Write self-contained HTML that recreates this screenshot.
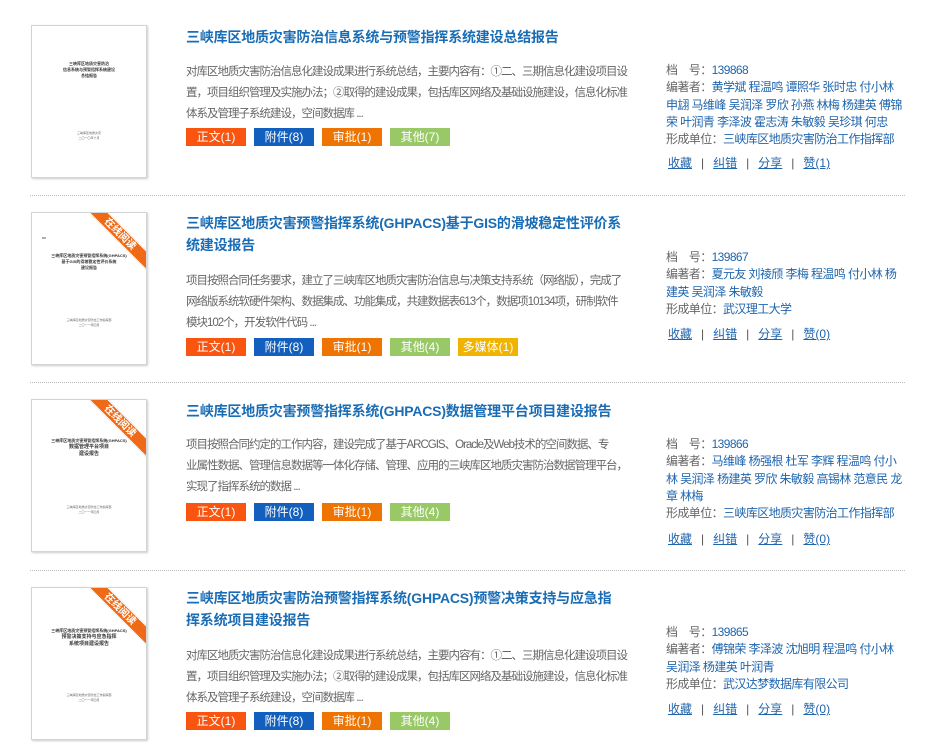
<!DOCTYPE html>
<html><head><meta charset="utf-8"><style>
*{margin:0;padding:0;box-sizing:border-box}
body{width:941px;height:754px;background:#fff;font-family:"Liberation Sans","Noto Sans CJK SC",sans-serif;position:relative;overflow:hidden}
.thumb{position:absolute;left:31px;width:116px;height:153px;border:1px solid #d4d4d4;box-shadow:1px 1px 2px #ccc;background:#fff;overflow:hidden}
.thumb .t{position:absolute;left:10px;right:10px;text-align:center;font-size:4px;line-height:6px;color:#333;font-weight:bold}
.thumb .b{position:absolute;left:10px;right:10px;top:105px;text-align:center;font-size:3px;line-height:5px;color:#666}
.rib{position:absolute;right:-24px;top:14px;width:100px;height:14px;background:#ee6a16;color:#fff;font-size:10px;line-height:14px;text-align:center;transform:rotate(45deg);font-weight:bold;border-top:1px solid #fff;border-bottom:1px solid #fff}
.title{position:absolute;left:186px;font-size:14px;font-weight:bold;color:#1a6db5;line-height:22px;white-space:nowrap;letter-spacing:-0.2px}
.desc{position:absolute;left:186px;font-size:11.5px;color:#666;line-height:21px;white-space:nowrap;letter-spacing:-1px}
.btns{position:absolute;left:186px;height:18px}
.btn{position:absolute;top:0;width:60px;height:18px;color:#fff;font-size:12px;line-height:18px;text-align:center}
.c1{background:#fa5510}.c2{background:#135fbd}.c3{background:#ee7300}.c4{background:#99c966}.c5{background:#f0b300}
.meta{position:absolute;left:666px;font-size:12px;line-height:17.3px;color:#666;white-space:nowrap;letter-spacing:-0.6px}
.meta a{color:#1f65ad;text-decoration:none}
.links{position:absolute;left:668px;font-size:12px;color:#555;white-space:nowrap}
.links a{color:#1f65ad;text-decoration:underline}
.links span{margin:0 9px}
.sep{position:absolute;left:30px;width:875px;border-top:1px dotted #bbb}
</style></head><body>

 <div class="thumb" style="top:25px"><div class="t" style="top:35px">三峡库区地质灾害防治<br>信息系统与预警指挥系统建设<br>总结报告</div><div class="b">三峡库区地质灾害<br>二〇一〇年十月</div></div>
 <div class="title" style="top:26px">三峡库区地质灾害防治信息系统与预警指挥系统建设总结报告</div>
 <div class="desc" style="top:62px">对库区地质灾害防治信息化建设成果进行系统总结，主要内容有：①二、三期信息化建设项目设<br>置，项目组织管理及实施办法；②取得的建设成果，包括库区网络及基础设施建设，信息化标准<br>体系及管理子系统建设，空间数据库 ...</div>
 <div class="btns" style="top:128px"><div class="btn c1" style="left:0">正文(1)</div><div class="btn c2" style="left:68px">附件(8)</div><div class="btn c3" style="left:136px">审批(1)</div><div class="btn c4" style="left:204px">其他(7)</div></div>
 <div class="meta" style="top:62px">档　号：<a>139868</a><br>编著者：<a>黄学斌 程温鸣 谭照华 张时忠 付小林<br>申翃 马维峰 吴润泽 罗欣 孙燕 林梅 杨建英 傅锦<br>荣 叶润青 李泽波 霍志涛 朱敏毅 吴珍琪 何忠</a><br>形成单位：<a>三峡库区地质灾害防治工作指挥部</a></div>
 <div class="links" style="top:154px"><a>收藏</a><span>|</span><a>纠错</a><span>|</span><a>分享</a><span>|</span><a>赞(1)</a></div>
<div class="sep" style="top:195px"></div>

 <div class="thumb" style="top:212px"><div class="t" style="top:22px;text-align:left">▭</div><div class="t" style="top:40px">三峡库区地质灾害预警指挥系统(GHPACS)<br>基于GIS的滑坡稳定性评价系统<br>建设报告</div><div class="b">三峡库区地质灾害防治工作指挥部<br>二〇一一年四月</div><div class="rib">在线阅读</div></div>
 <div class="title" style="top:212px">三峡库区地质灾害预警指挥系统(GHPACS)基于GIS的滑坡稳定性评价系<br>统建设报告</div>
 <div class="desc" style="top:271px">项目按照合同任务要求，建立了三峡库区地质灾害防治信息与决策支持系统（网络版），完成了<br>网络版系统软硬件架构、数据集成、功能集成，共建数据表613个，数据项10134项，研制软件<br>模块102个，开发软件代码 ...</div>
 <div class="btns" style="top:338px"><div class="btn c1" style="left:0">正文(1)</div><div class="btn c2" style="left:68px">附件(8)</div><div class="btn c3" style="left:136px">审批(1)</div><div class="btn c4" style="left:204px">其他(4)</div><div class="btn c5" style="left:272px">多媒体(1)</div></div>
 <div class="meta" style="top:249px">档　号：<a>139867</a><br>编著者：<a>夏元友 刘祾颀 李梅 程温鸣 付小林 杨<br>建英 吴润泽 朱敏毅</a><br>形成单位：<a>武汉理工大学</a></div>
 <div class="links" style="top:325px"><a>收藏</a><span>|</span><a>纠错</a><span>|</span><a>分享</a><span>|</span><a>赞(0)</a></div>
<div class="sep" style="top:382px"></div>

 <div class="thumb" style="top:399px"><div class="t" style="top:38px">三峡库区地质灾害预警指挥系统(GHPACS)<br><span style="font-size:5px;line-height:7px">数据管理平台项目<br>建设报告</span></div><div class="b">三峡库区地质灾害防治工作指挥部<br>二〇一一年四月</div><div class="rib">在线阅读</div></div>
 <div class="title" style="top:400px">三峡库区地质灾害预警指挥系统(GHPACS)数据管理平台项目建设报告</div>
 <div class="desc" style="top:435px">项目按照合同约定的工作内容，建设完成了基于ARCGIS、Oracle及Web技术的空间数据、专<br>业属性数据、管理信息数据等一体化存储、管理、应用的三峡库区地质灾害防治数据管理平台，<br>实现了指挥系统的数据 ...</div>
 <div class="btns" style="top:503px"><div class="btn c1" style="left:0">正文(1)</div><div class="btn c2" style="left:68px">附件(8)</div><div class="btn c3" style="left:136px">审批(1)</div><div class="btn c4" style="left:204px">其他(4)</div></div>
 <div class="meta" style="top:436px">档　号：<a>139866</a><br>编著者：<a>马维峰 杨强根 杜军 李辉 程温鸣 付小<br>林 吴润泽 杨建英 罗欣 朱敏毅 高锡林 范意民 龙<br>章 林梅</a><br>形成单位：<a>三峡库区地质灾害防治工作指挥部</a></div>
 <div class="links" style="top:530px"><a>收藏</a><span>|</span><a>纠错</a><span>|</span><a>分享</a><span>|</span><a>赞(0)</a></div>
<div class="sep" style="top:570px"></div>

 <div class="thumb" style="top:587px"><div class="t" style="top:40px">三峡库区地质灾害预警指挥系统(GHPACS)<br><span style="font-size:5px;line-height:7px">预警决策支持与应急指挥<br>系统项目建设报告</span></div><div class="b">三峡库区地质灾害防治工作指挥部<br>二〇一一年四月</div><div class="rib">在线阅读</div></div>
 <div class="title" style="top:587px">三峡库区地质灾害防治预警指挥系统(GHPACS)预警决策支持与应急指<br>挥系统项目建设报告</div>
 <div class="desc" style="top:646px">对库区地质灾害防治信息化建设成果进行系统总结，主要内容有：①二、三期信息化建设项目设<br>置，项目组织管理及实施办法；②取得的建设成果，包括库区网络及基础设施建设，信息化标准<br>体系及管理子系统建设，空间数据库 ...</div>
 <div class="btns" style="top:712px"><div class="btn c1" style="left:0">正文(1)</div><div class="btn c2" style="left:68px">附件(8)</div><div class="btn c3" style="left:136px">审批(1)</div><div class="btn c4" style="left:204px">其他(4)</div></div>
 <div class="meta" style="top:624px">档　号：<a>139865</a><br>编著者：<a>傅锦荣 李泽波 沈旭明 程温鸣 付小林<br>吴润泽 杨建英 叶润青</a><br>形成单位：<a>武汉达梦数据库有限公司</a></div>
 <div class="links" style="top:700px"><a>收藏</a><span>|</span><a>纠错</a><span>|</span><a>分享</a><span>|</span><a>赞(0)</a></div>

</body></html>
